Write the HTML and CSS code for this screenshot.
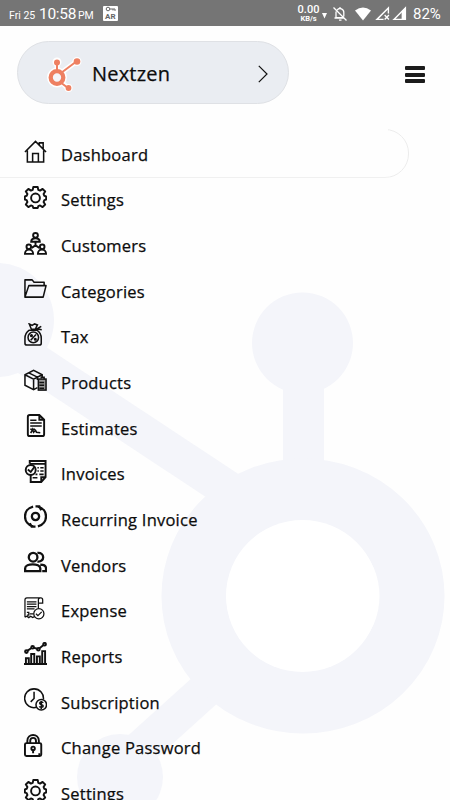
FILE: index.html
```html
<!DOCTYPE html>
<html lang="en">

<head>
  <meta charset="UTF-8">
  <meta name="viewport" content="width=device-width, initial-scale=1.0">
  <title>Nextzen</title>
  <link rel="stylesheet" href="styles.css">
</head>

<body>
  <!-- Background logo -->
  <svg class="watermark" viewBox="0 0 450 800">
    <g fill="#f4f5fa" stroke="#f4f5fa">
      <circle cx="302.500" cy="343" r="50.500" stroke="none" />
      <circle cx="-3" cy="320" r="57" stroke="none" />
      <circle cx="120" cy="777" r="43" stroke="none" />
      <path d="M303.500 370V475" stroke-width="41" />
      <path d="M20 352L235 494" stroke-width="37" />
      <path d="M212 684L120 767" stroke-width="36" />
      <ellipse cx="303" cy="596" rx="109" ry="105" fill="none" stroke-width="65" />
      <ellipse cx="302.500" cy="596" rx="76.500" ry="76" fill="#fff" stroke="none" />
    </g>
  </svg>

  <!-- Status bar -->
  <header class="status">
    <div class="status-left">
      <span class="date">Fri 25</span>
      <span class="time">10:58</span>
      <span class="ampm">PM</span>
      <span class="badge">
        <svg viewBox="0 0 15 6"><circle cx="5" cy="3" r="1.800" /><path d="M7 3h5v2M10 3v1.500" /></svg>
        <b>AR</b>
      </span>
    </div>
    <div class="status-right">
      <span class="speed"><b>0.00</b><small>KB/s</small></span>
      <svg class="down" viewBox="0 0 5 6"><path d="M0 0h5L2.500 5.500z" fill="#fff" /></svg>
      <svg class="bell" viewBox="0 0 16 16" fill="none" stroke="#fff" stroke-width="1.300"><path d="M1.500 1.500l13 13M4 5.500v6.200h8M5.200 4a3.700 3.700 0 0 1 6.600 2.500v4M2.500 12h9.500M8 1v1.500M7 14.200h2.500" /></svg>
      <svg class="wifi" viewBox="0 0 16 14"><path d="M0 3.500Q8-2.500 16 3.500L8 13.500z" fill="#fff" /></svg>
      <svg class="signal first" viewBox="0 0 14 14"><path d="M8 12.500H1.800L12.500 1.800V7M9 8.500l4 4M13 8.500l-4 4" fill="none" stroke="#fff" stroke-width="1.300" /></svg>
      <svg class="signal" viewBox="0 0 14 14"><path d="M1.800 12.500L12.500 1.800v10.700z" fill="none" stroke="#fff" stroke-width="1.300" /><path d="M9 13V5l4-4v12z" fill="#fff" /></svg>
      <span class="battery">82%</span>
    </div>
  </header>

  <!-- Company and menu button -->
  <div class="top">
    <div class="company">
      <svg class="logo" viewBox="0 0 36 36">
        <g stroke="#fff" stroke-width="5" fill="#fff">
          <circle cx="10" cy="21.500" r="7" stroke-width="6" />
          <path d="M10 16V7M14 17L30 5M14 26l8 7" fill="none" />
          <circle cx="10" cy="6" r="2" /><circle cx="30" cy="5.500" r="2" /><circle cx="21.500" cy="32" r="1.500" />
        </g>
        <g stroke="#ee8062" fill="#ee8062">
          <circle cx="10" cy="21.500" r="6.300" fill="#f5f6fb" stroke-width="4.300" />
          <path d="M10 16V7M14 17L30 5M13 26l8 6" fill="none" stroke-width="2" />
          <circle cx="10" cy="6.500" r="3" stroke="none" /><circle cx="30" cy="5.500" r="3.300" stroke="none" /><circle cx="21.500" cy="32" r="2.900" stroke="none" />
        </g>
      </svg>
      <span class="name">Nextzen</span>
      <svg class="arrow" viewBox="0 0 10 18"><path d="M.8.8L9 9 .8 17.200" fill="none" stroke="#111" stroke-width="1.200" /></svg>
    </div>
    <div class="burger"><i></i><i></i><i></i></div>
  </div>

  <!-- Side menu -->
  <nav class="menu">
    <a class="item active">
      <svg viewBox="0 0 24 24"><path d="M1 12.500L12 1.500l11 11M3.500 11v12h17V11M9 23v-9h6v9M16 5V3h4v6.500" /></svg>
      <span>Dashboard</span>
    </a>
    <a class="item">
      <svg class="bold" viewBox="0 0 24 24"><path id="gear" d="M9.700 1h4.600l.6 3 1.900.8 2.600-1.800 2.700 2.700-1.700 2.600.8 1.900 1.900.6v3.400l-1.900.6-.8 1.900 1.700 2.600-2.700 2.700-2.600-1.700-1.900.8-.6 1.900H9.700l-.6-1.900-1.900-.8L4.600 22l-2.700-2.700 1.700-2.600-.8-1.900-1.900-.6v-3.400l1.900-.6.8-1.900-1.700-2.600L4.600 3l2.600 1.800L9.100 4z" stroke-linejoin="round" /><circle cx="12" cy="12.500" r="4.600" /></svg>
      <span>Settings</span>
    </a>
    <a class="item">
      <svg class="bold" viewBox="0 0 24 24"><circle cx="12" cy="3.500" r="2.500" /><path d="M7.500 10.200c0-5 9-5 9 0zM12 11v4M12 14l-4 2.500M12 14l4 2.500" /><circle cx="5" cy="15.500" r="2.400" /><path d="M1 22.800c0-6 8.500-6 8.500 0z" /><circle cx="19" cy="15.500" r="2.400" /><path d="M14.500 22.800c0-6 8.500-6 8.500 0z" /></svg>
      <span>Customers</span>
    </a>
    <a class="item">
      <svg viewBox="0 0 24 24"><path d="M1 21V3h7.500l2 2.500H21V9M1 21L5 9h18l-3 12z" stroke-linejoin="round" /></svg>
      <span>Categories</span>
    </a>
    <a class="item">
      <svg viewBox="0 0 24 24"><path d="M5.500 7.500C2.500 9.500 1 12 1 16v5q0 2 2 2h13q2 0 2-2v-5c0-4-1.500-6.500-4.500-8.500zM7.500 6L5.500 1l3 1.500L11 1l3 1-2 4M7 6.500h6l5-3M13 6l5.500 1" /><circle cx="9.700" cy="15" r="5.500" /><path d="M12.500 12L7 18" /><circle cx="7.800" cy="13.200" r=".8" /><circle cx="11.800" cy="17" r=".8" /></svg>
      <span>Tax</span>
    </a>
    <a class="item">
      <svg viewBox="0 0 24 24"><path d="M14 19.500l-4 2-9-4.500V6L10 1.500 19 6v3M1 6l9 4.500L19 6M10 10.500v11M5 4l9 4.500v3" /><rect x="15" y="10.500" width="8" height="11.500" fill="#999" /><path d="M16 14h5M16 17h5M16 20h5M18 10V8.500h3V11" /></svg>
      <span>Products</span>
    </a>
    <a class="item">
      <svg viewBox="0 0 24 24"><path class="bold" d="M6 1h10l5 5v15q0 2-2 2H6q-2 0-2-2V3q0-2 2-2zM16 1v5h5" /><path d="M6.500 6.500H13M6.500 9.500h12M6.500 12.500h12M6.500 16h5M7 20l2-4 1 3 2-2 1 2 4 .5" /></svg>
      <span>Estimates</span>
    </a>
    <a class="item">
      <svg viewBox="0 0 24 24"><path class="bold" d="M6 4V1h16.500v17L18 23H7V15M18 22.500V18h4.500M6 4h16" /><path d="M14 8h1.500M17 8h3.500M14 11.500h1.500M17 11.500h3.500M12 15h2M16 15h4.500M9 18.500h5" /><circle class="bold" cx="7" cy="10.500" r="5.200" /><path class="bold" d="M4 10l3 2.500L11 7" /></svg>
      <span>Invoices</span>
    </a>
    <a class="item">
      <svg class="heavy" viewBox="0 0 24 24"><path d="M9.500 1.600C-2 4.500-1.500 19.500 9.500 22.400M14.500 1.600c11.500 2.900 11 17.900 0 20.800M12 1.500h4l2 4M12 22.500H8l-2-3.500" /><circle cx="12" cy="12" r="3.800" /></svg>
      <span>Recurring Invoice</span>
    </a>
    <a class="item">
      <svg class="heavy" viewBox="0 0 24 24"><circle cx="9.500" cy="6.500" r="4.500" /><path d="M14 2c8-1 8 10 0 9M1.200 21v-3c0-5.500 15.800-5.500 15.800 0v3zM17 14.200q6 0 6 4V21h-4" /></svg>
      <span>Vendors</span>
    </a>
    <a class="item">
      <svg class="thin" viewBox="0 0 24 24"><path d="M1 21V3q0-2 2-2h14.500q2 0 2 2v3.500H15V3q0-2 2-2M15 6v6M1 21l2-1 2 1.500L7 20l2 1.500 2-1M3 5h10M3 7.500h10M3 10h10M3 12.500h8M3 16h2v3H3M6 17.500h4" /><circle cx="15.500" cy="17.500" r="5.300" /><path d="M12.500 17.500l2 2 4-4" /></svg>
      <span>Expense</span>
    </a>
    <a class="item">
      <svg class="bold" viewBox="0 0 24 24"><path d="M0 23h24M2 23v-6h3v6M7.500 23V12.500h3.200V23M13.500 23v-8h3v8M19 23V9.500h3V23M3 9.500l6-4 6 2 6-5" /><g fill="#fff"><circle cx="2.500" cy="10" r="1.400" /><circle cx="9" cy="5.500" r="1.400" /><circle cx="15" cy="7.500" r="1.400" /><circle cx="21.500" cy="2.300" r="1.400" /></g></svg>
      <span>Reports</span>
    </a>
    <a class="item">
      <svg viewBox="0 0 24 24"><path d="M13 20.200A9.800 9.800 0 1 1 20.200 12M10.500 4v7L7 14.500" /><circle cx="18" cy="17.500" r="5.500" /><path d="M20 15.500c-1-1.500-4-1-3.500.8.400 1.500 3.500.9 3.500 2.600 0 1.500-3 1.700-4 .2M18 13.500V22" /></svg>
      <span>Subscription</span>
    </a>
    <a class="item">
      <svg class="bold" viewBox="0 0 24 24"><rect x="1" y="9.500" width="17" height="13.500" rx="1.500" /><path d="M3.500 9.500V7c0-8 12-8 12 0v2.500M6.500 9.500V7c0-4 6-4 6 0v2.500M9.500 16v4M15 21h2" /><circle cx="9.500" cy="15" r="1.800" /></svg>
      <span>Change Password</span>
    </a>
    <a class="item">
      <svg class="bold" viewBox="0 0 24 24"><use href="#gear" /><circle cx="12" cy="12.500" r="4.600" /></svg>
      <span>Settings</span>
    </a>
  </nav>
</body>

</html>
```
FILE: styles.css
```css
body {
  margin: 0;
  height: 800px;
  overflow: hidden;
  position: relative;
  background-color: #fefefe;
  font-family: "Open Sans", "Noto Sans", sans-serif;
  color: #0c0c0c;
}

svg {
  display: block;
  flex: none;
}

/* Large logo behind the menu */
.watermark {
  position: absolute;
  left: 0;
  top: 0;
  width: 450px;
  height: 800px;
  z-index: -1;
}

/* Status bar */
.status {
  height: 26px;
  box-sizing: border-box;
  padding: 1px 8px 0 9px;
  display: flex;
  justify-content: space-between;
  align-items: center;
  background-color: #757575;
  color: #fff;
  font-family: Roboto, sans-serif;
}

.status-left {
  display: flex;
  align-items: baseline;
  line-height: 20px;
  padding-top: 2px;
}

.date {
  font-size: 10.5px;
  width: 30px;
  white-space: nowrap;
}

.time {
  font-size: 15.5px;
  letter-spacing: -.3px;
  width: 39px;
}

.ampm {
  font-size: 10.5px;
}

.badge {
  align-self: center;
  width: 15px;
  height: 15px;
  margin: -2px 0 0 9px;
  border-radius: 1px;
  background-color: #fff;
  color: #666;
  text-align: center;
}

.badge svg {
  width: 15px;
  height: 6px;
  fill: none;
  stroke: #666;
}

.badge b {
  display: block;
  font-size: 8px;
  line-height: 9px;
}

.status-right {
  display: flex;
  align-items: center;
}

.speed {
  width: 23px;
  text-align: center;
}

.speed b {
  display: block;
  font-size: 11px;
  font-weight: 500;
  line-height: 11px;
}

.speed small {
  display: block;
  font-size: 7.5px;
  font-weight: 700;
  line-height: 8px;
}

.down {
  width: 5px;
  height: 6px;
  margin: 4px 0 0 2px;
}

.bell {
  width: 16px;
  height: 16px;
  margin-left: 5px;
}

.wifi {
  width: 16px;
  height: 14px;
  margin-left: 7px;
}

.signal {
  width: 15px;
  height: 15px;
  margin-left: 2px;
}

.first {
  margin-left: 4px;
}

.battery {
  width: 29px;
  margin: 1px 0 0 6px;
  font-size: 15px;
}

/* Company selector */
.top {
  display: flex;
  justify-content: space-between;
  align-items: flex-start;
  padding: 15px 25px 0 17px;
  height: 90px;
}

.company {
  display: flex;
  align-items: center;
  width: 272px;
  height: 63px;
  box-sizing: border-box;
  padding: 2px 20px 0 29px;
  border: 1px solid #dfe1e5;
  border-radius: 32px;
  background-color: #eaedf2;
}

.logo {
  width: 36px;
  height: 36px;
  overflow: visible;
}

.name {
  flex: 1;
  margin-left: 9px;
  font-size: 20px;
  font-weight: 500;
  letter-spacing: .2px;
  -webkit-text-stroke: .25px #0c0c0c;
}

.arrow {
  width: 10px;
  height: 18px;
}

.burger {
  display: flex;
  flex-direction: column;
  gap: 2.5px;
  margin-top: 25px;
}

.burger i {
  width: 20px;
  height: 4px;
  border-radius: 1px;
  background-color: #1c1c1c;
}

/* Menu */
.item {
  display: flex;
  align-items: center;
  height: 45.65px;
  box-sizing: border-box;
  padding: 1px 0 0 24px;
}

.item svg {
  width: 23px;
  height: 23px;
  margin: -5px 14px 0 0;
  fill: none;
  stroke: #111;
  stroke-width: 1.6;
}

.item svg.thin {
  stroke-width: 1.3;
}

.item svg.bold,
.item .bold {
  stroke-width: 2;
}

.item svg.heavy {
  stroke-width: 2.4;
}

.item span {
  font-size: 16.5px;
  font-weight: 500;
  letter-spacing: .23px;
  white-space: nowrap;
  -webkit-text-stroke: .25px #0c0c0c;
}

.active {
  position: relative;
  width: 409px;
}

/* Outline of the selected item, open on the left */
.active::after {
  content: "";
  position: absolute;
  left: -30px;
  right: 0;
  top: -2px;
  bottom: -1px;
  border: 1px solid #ececec;
  border-radius: 24px;
  clip-path: polygon(0 50%, 418px 50%, 418px 0, 100% 0, 100% 100%, 0 100%);
}
```
